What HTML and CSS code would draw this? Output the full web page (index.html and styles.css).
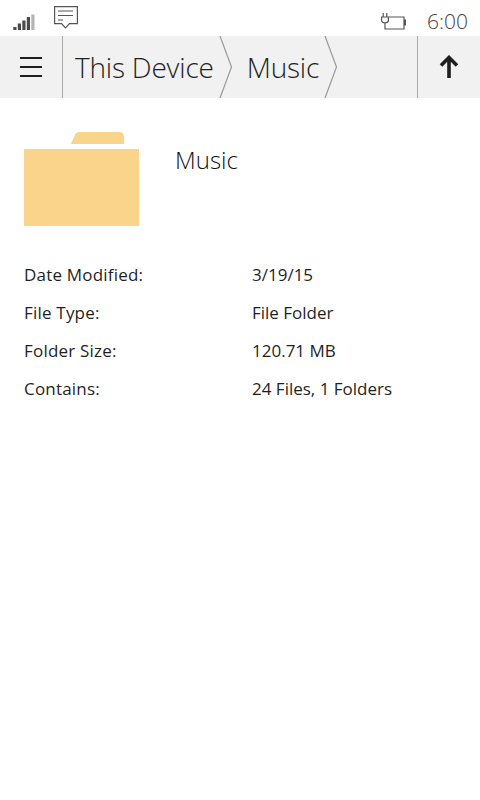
FILE: index.html
```html
<!DOCTYPE html>
<html lang="en">
<head>
  <meta charset="UTF-8" />
  <meta name="viewport" content="width=device-width, initial-scale=1.0" />
  <title>Music | Properties</title>
  <link rel="stylesheet" href="styles.css">
</head>
<body>
  <div class="status-bar">
    <svg class="signal-icon" width="22" height="16" viewBox="0 0 22 16">
      <rect x="0.3" y="13" width="3.2" height="3" fill="#4a4a4a"/>
      <rect x="4.8" y="9.5" width="3.2" height="6.5" fill="#4a4a4a"/>
      <rect x="9.3" y="6.5" width="3.2" height="9.5" fill="#4a4a4a"/>
      <rect x="13.8" y="3" width="3.2" height="13" fill="#4a4a4a"/>
      <rect x="18.3" y="0.5" width="3.2" height="15.5" fill="#b5b5b5"/>
    </svg>
    <svg class="message-icon" width="26" height="25" viewBox="0 0 26 25" fill="none" stroke="#555" stroke-width="1.2">
      <path d="M1.6 1.6H24.4V18.6H16.5L12.5 22.8L8.5 18.6H1.6Z"/>
      <path d="M5 6H20M5 10.5H20M5 15H10"/>
    </svg>
    <svg class="battery-icon" width="25" height="17" viewBox="0 0 25 17" fill="none" stroke="#555" stroke-width="1.2">
      <path d="M0.6 4H7.4V7.5C7.4 10.5 0.6 10.5 0.6 7.5ZM2.2 0V4M5.8 0V4M4 10V16H23V4H8"/>
      <rect x="23" y="6.5" width="2" height="6" fill="#555" stroke="none"/>
    </svg>
    <span class="clock">6:00</span>
  </div>

  <div class="toolbar">
    <button class="menu-button">
      <span></span><span></span><span></span>
    </button>
    <div class="crumbs">
      <div class="crumb">This Device</div>
      <svg class="chevron" width="14" height="62" viewBox="0 0 14 62" fill="none" stroke="#9a9a9a" stroke-width="1.2">
        <path d="M1 0L12.5 31L1 62"/>
      </svg>
      <div class="crumb">Music</div>
      <svg class="chevron" width="14" height="62" viewBox="0 0 14 62" fill="none" stroke="#9a9a9a" stroke-width="1.2">
        <path d="M1 0L12.5 31L1 62"/>
      </svg>
    </div>
    <button class="up-button">
      <svg width="20" height="24" viewBox="0 0 20 24" fill="none" stroke="#1f1f1f" stroke-width="3.6">
        <path d="M10 23V3M2 10.5L10 2.5L18 10.5"/>
      </svg>
    </button>
  </div>

  <main class="details">
    <div class="folder-head">
      <svg class="folder-icon" width="116" height="96" viewBox="0 0 116 96">
        <path d="M47 12L51 2.5Q52 0 55 0H95Q100 0 100 5V12Z" fill="#f9d48a"/>
        <rect x="0" y="17" width="115" height="77" fill="#f9d48a"/>
      </svg>
      <h1 class="folder-name">Music</h1>
    </div>

    <div class="info-row"><span class="info-label">Date Modified:</span><span>3/19/15</span></div>
    <div class="info-row"><span class="info-label">File Type:</span><span>File Folder</span></div>
    <div class="info-row"><span class="info-label">Folder Size:</span><span>120.71 MB</span></div>
    <div class="info-row"><span class="info-label">Contains:</span><span>24 Files, 1 Folders</span></div>
  </main>
</body>
</html>
```

FILE: styles.css
```css
body {
  margin: 0;
  font-family: "Open Sans", "Noto Sans", sans-serif;
  background-color: #ffffff;
  color: #1f1f1f;
  height: 800px;
  overflow: hidden;
}
.status-bar {
  height: 36px;
  display: flex;
  align-items: flex-start;
  color: #444444;
}
.signal-icon {
  margin: 14px 0 0 13px;
}
.message-icon {
  margin: 5px 0 0 18px;
}
.battery-icon {
  margin: 13px 0 0 auto;
}
.clock {
  margin: 8px 12px 0 21px;
  font-size: 21px;
  font-weight: 300;
  line-height: 27px;
}
.toolbar {
  height: 62px;
  background-color: #f1f1f1;
  display: flex;
}
.toolbar button {
  border: none;
  background: none;
  padding: 0;
}
.menu-button {
  width: 62px;
  display: flex;
  flex-direction: column;
  align-items: center;
  justify-content: center;
  gap: 7px;
  border-right: 1px solid #aaaaaa !important;
  box-sizing: content-box;
}
.menu-button span {
  display: block;
  width: 22px;
  height: 2px;
  background-color: #1f1f1f;
}
.crumbs {
  flex-grow: 1;
  display: flex;
  align-items: center;
}
.crumb {
  font-size: 28px;
  font-weight: 300;
  letter-spacing: -0.2px;
  line-height: 60px;
  color: #1f1f1f;
  margin-left: 12px;
  margin-right: 5px;
}
.chevron + .crumb {
  margin-left: 14px;
}
.up-button {
  width: 63px;
  border-left: 1px solid #aaaaaa !important;
  display: flex;
  align-items: center;
  justify-content: center;
}
.details {
  padding: 34px 24px 0;
  font-size: 17px;
}
.folder-head {
  display: flex;
  align-items: flex-start;
  margin-bottom: 28px;
}
.folder-name {
  margin: 9px 0 0 35px;
  font-size: 24px;
  font-weight: 300;
  line-height: 38px;
  color: #111111;
}
.info-row {
  display: flex;
  height: 38px;
  line-height: 38px;
}
.info-label {
  width: 228px;
  letter-spacing: 0.2px;
}
```
